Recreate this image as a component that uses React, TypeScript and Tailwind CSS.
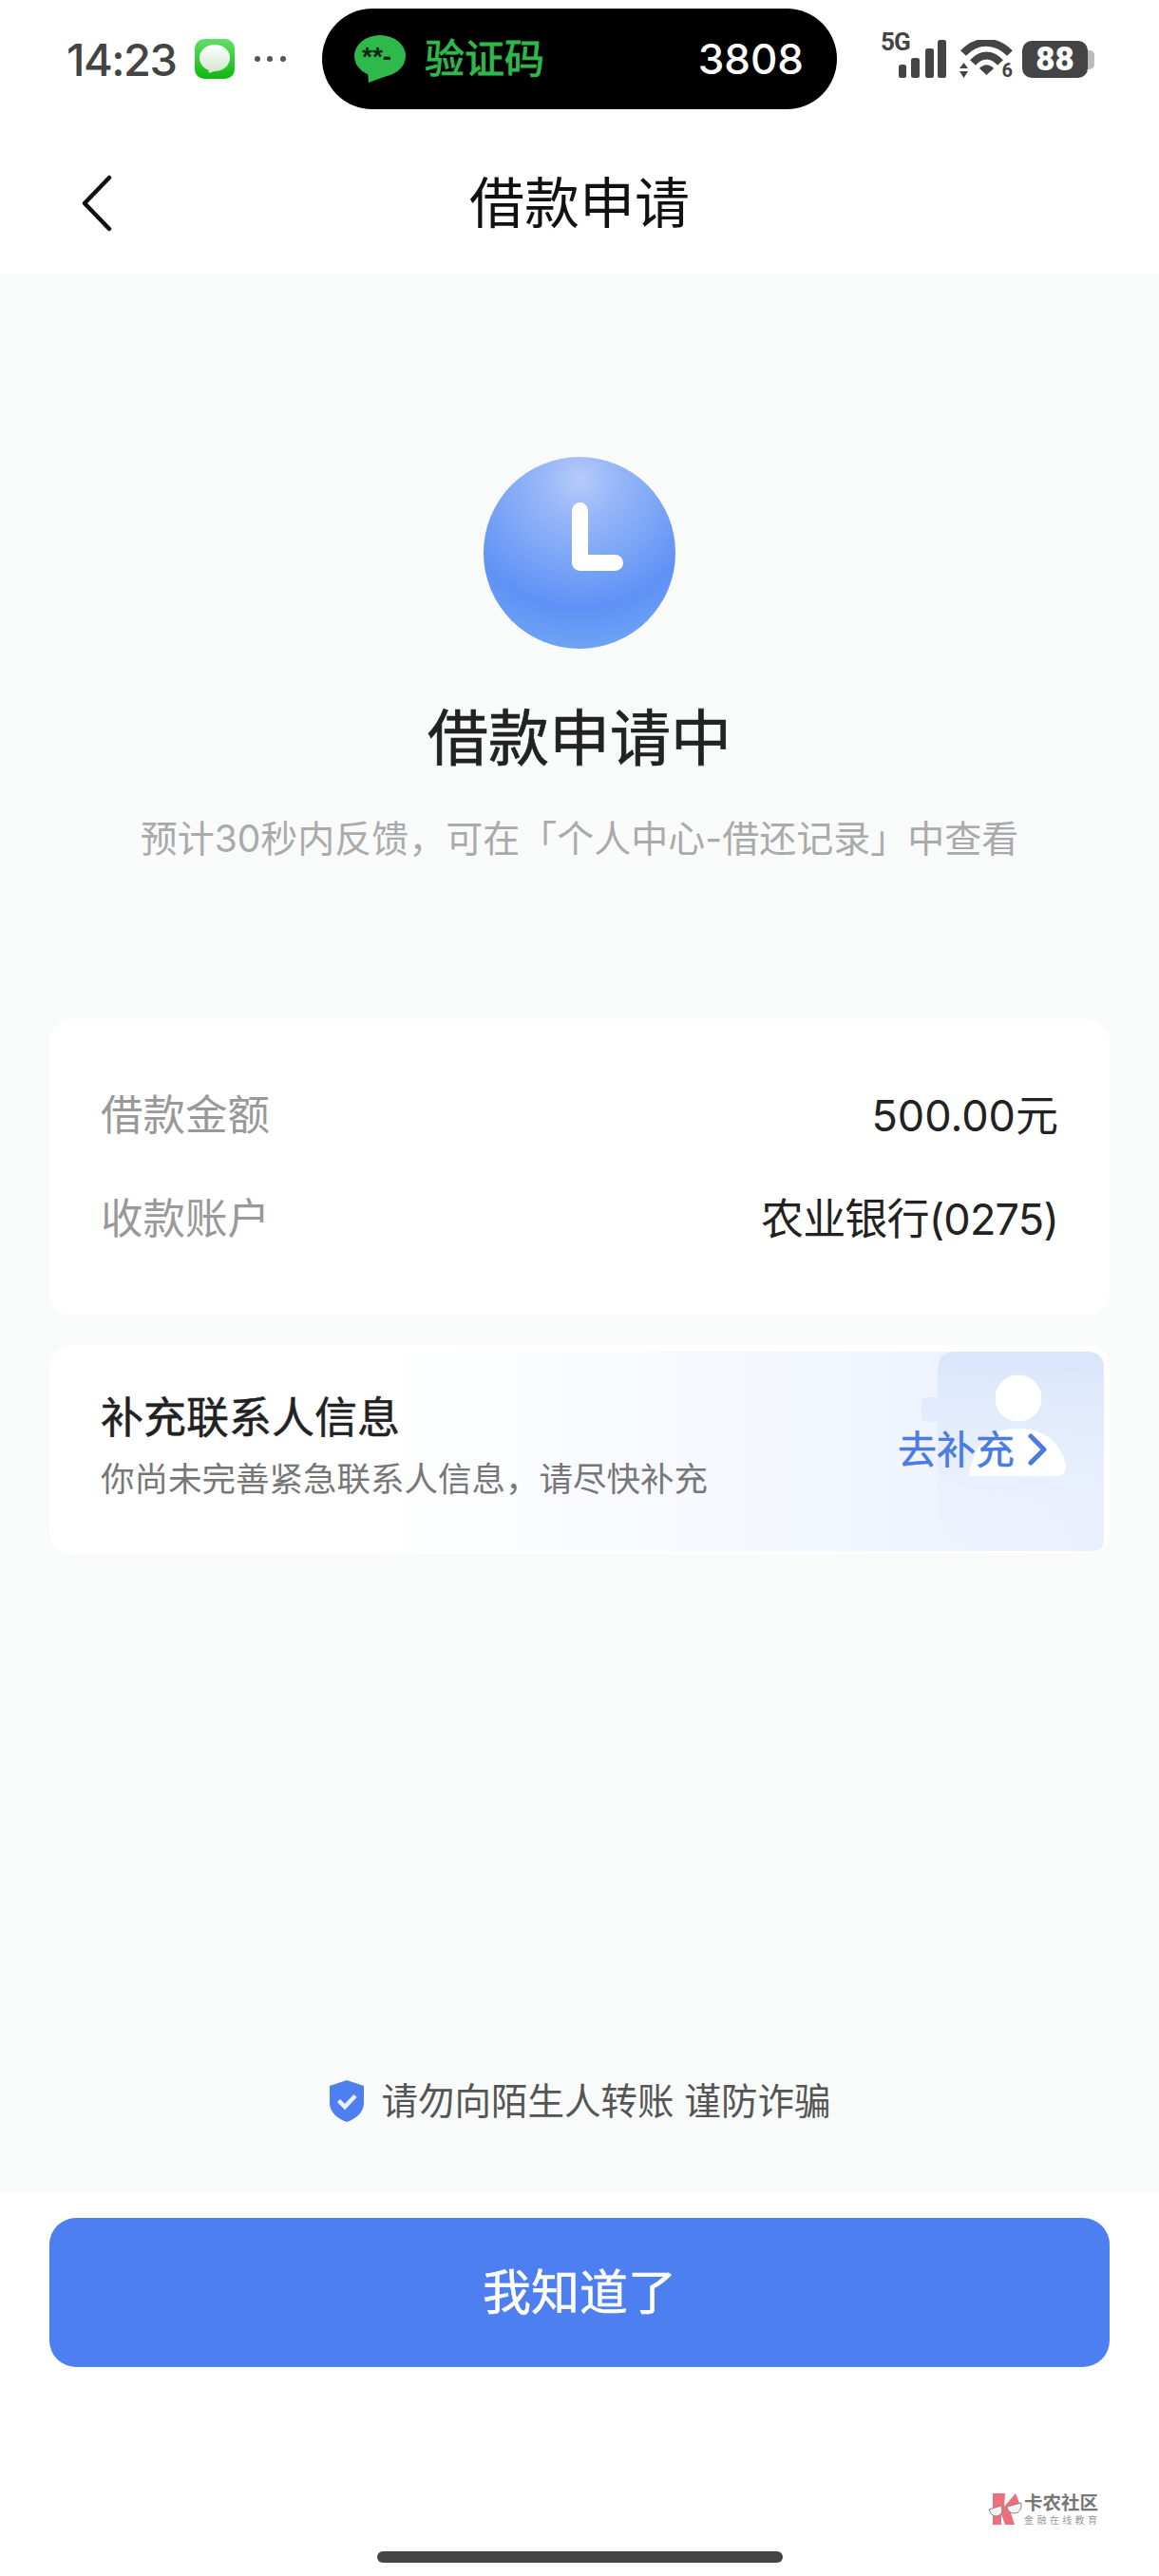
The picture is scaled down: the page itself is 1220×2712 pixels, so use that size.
const font = "font-['Inter','Noto_Sans_CJK_SC',sans-serif]";

function MessageBadge() {
  return (
    <svg width="42" height="42" viewBox="0 0 42 42">
      <defs>
        <linearGradient id="msgBg" x1="0" y1="0" x2="0" y2="1">
          <stop offset="0" stopColor="#5fe06a" />
          <stop offset="1" stopColor="#0fb80f" />
        </linearGradient>
        <linearGradient id="msgBubble" x1="0" y1="0" x2="0" y2="1">
          <stop offset="0" stopColor="#ffffff" />
          <stop offset="1" stopColor="#d4e8d0" />
        </linearGradient>
      </defs>
      <rect width="42" height="42" rx="10" fill="url(#msgBg)" />
      <ellipse cx="21" cy="20" rx="16" ry="14" fill="url(#msgBubble)" />
      <path d="M14 31 L15 36 L24 33 Z" fill="#d4e8d0" />
    </svg>
  );
}

function CodeBubble() {
  return (
    <div className="relative w-[54px] h-[50px] shrink-0">
      <svg width="54" height="50" viewBox="0 0 54 50" className="block">
        <ellipse cx="27" cy="22" rx="27" ry="22" fill="#2fb84c" />
        <path d="M14 38 L15 50 L34 43 Z" fill="#2fb84c" />
      </svg>
      <span className="absolute left-[8px] top-[8px] text-[28px] leading-[30px] font-bold text-[#0c2a12] font-['Liberation_Sans',sans-serif]">**-</span>
    </div>
  );
}

function StatusIcons() {
  return (
    <div className="flex items-end h-[44px] text-[#444]">
      <div className="relative w-[68px] h-[44px]">
        <span className="absolute left-[-2px] top-[-9px] text-[26px] leading-[28px] font-bold tracking-[-1px] font-['Roboto',sans-serif]">5G</span>
        <svg width="52" height="40" viewBox="0 0 52 40" className="absolute right-0 bottom-[1px]">
          <rect x="1" y="26" width="8" height="14" rx="2.5" fill="#444" />
          <rect x="14" y="19" width="9" height="21" rx="2.5" fill="#444" />
          <rect x="29" y="9" width="9" height="31" rx="2.5" fill="#444" />
          <rect x="42" y="0" width="9" height="40" rx="2.5" fill="#444" />
        </svg>
      </div>
      <div className="relative w-[56px] h-[40px] ml-[13px] mb-[1px]">
        <svg width="56" height="40" viewBox="0 0 56 40" className="block">
          <path d="M4 14 C18 -1 38 -1 53 14" fill="none" stroke="#444" strokeWidth="8" />
          <path d="M14 24 C23 14 34 14 43 24" fill="none" stroke="#444" strokeWidth="8" />
          <path d="M21 30 C26 25 31 25 36 30 L28.5 37 Z" fill="#444" />
          <path d="M4.5 24 L9 30 H0 Z M4.5 40 L0 33 H9 Z" fill="#444" />
        </svg>
        <span className="absolute right-[0px] bottom-[-3px] text-[20px] leading-[22px] font-bold font-['Roboto',sans-serif]">6</span>
      </div>
      <div className="flex items-center ml-[10px] mb-[1px]">
        <div className="w-[69px] h-[39px] rounded-[10px] bg-[#444] flex items-center justify-center text-[#fff] text-[35px] leading-none font-black font-['Roboto',sans-serif]">88</div>
        <div className="w-[7px] h-[20px] rounded-r-[5px] bg-[#bbb]" />
      </div>
    </div>
  );
}

function ClockFace() {
  return (
    <div className="w-[202px] h-[202px] rounded-full flex items-center justify-center bg-[radial-gradient(circle_at_50%_12%,#b5cbfa_0%,#97b6f9_20%,#7ea8f7_40%,#5f91f6_66%,#6ea3f5_87%)]">
      <svg width="202" height="202" viewBox="0 0 202 202" className="block">
        <path d="M101.5 56.5 V111.5 H138.5" fill="none" stroke="#fff" strokeWidth="17" strokeLinecap="round" strokeLinejoin="round" />
      </svg>
    </div>
  );
}

function ContactArt() {
  return (
    <svg width="1116" height="220" viewBox="0 0 1116 220" className="absolute inset-0 rounded-[24px]">
      <defs>
        <linearGradient id="bannerBg" x1="0" y1="0" x2="1" y2="0">
          <stop offset="0.3" stopColor="#ffffff" />
          <stop offset="0.65" stopColor="#f5f8fe" />
          <stop offset="1" stopColor="#e9f0fd" />
        </linearGradient>
        <linearGradient id="cardFade" x1="0" y1="0" x2="0" y2="1">
          <stop offset="0" stopColor="#d8e5fb" />
          <stop offset="0.75" stopColor="#e9f0fd" stopOpacity="0.5" />
          <stop offset="1" stopColor="#e9f0fd" stopOpacity="0" />
        </linearGradient>
      </defs>
      <path d="M0 7 H1092 Q1110 7 1110 25 V205 Q1110 217 1098 217 H0 Z" fill="url(#bannerBg)" />
      <path d="M935 217 V81 H924 Q918 81 918 75 V61 Q918 55 924 55 H935 V27 Q935 7 955 7 H1092 Q1110 7 1110 25 V205 Q1110 217 1098 217 Z" fill="url(#cardFade)" />
      <circle cx="1020" cy="56" r="24.5" fill="#fff" />
      <path d="M968 138 C973 104 990 88 1020 88 C1050 88 1064 104 1070 126 V128 Q1070 138 1060 138 Z" fill="#fff" />
    </svg>
  );
}

function Watermark() {
  return (
    <div className="absolute left-[1040px] top-[2625px] flex items-center">
      <svg width="36" height="34" viewBox="0 0 36 34" className="shrink-0">
        <path d="M5 0 H18 L17 14 L29 0 L33 10 L23 17 L28 33 H18 L14 22 V33 H5 Z" fill="#ec6f7c" />
        <path d="M1 17 L14 13 Q17 23 9 24 Q3 24 1 17 Z M20 14 L35 10 Q36 20 28 21 Q21 21 20 14 Z" fill="#f4f4f4" stroke="#888" strokeWidth="1" />
      </svg>
      <div className="ml-[2px] flex flex-col w-[80px]">
        <span className="text-[19.5px] leading-[20px] font-bold text-[#777] whitespace-nowrap">卡农社区</span>
        <span className="mt-[3px] text-[10px] leading-[11px] tracking-[3.4px] text-[#999] whitespace-nowrap">金融在线教育</span>
      </div>
    </div>
  );
}

export default function App() {
  return (
    <div className={`relative w-[1220px] h-[2712px] bg-white overflow-hidden flex flex-col ${font}`}>
      {/* status bar */}
      <div className="h-[124px] shrink-0 pt-[9px] flex items-start">
        <div className="w-[339px] h-[106px] flex items-center pl-[70px] shrink-0">
          <span className="text-[47px] leading-none font-medium text-[#444] tracking-[-1.5px]">14:23</span>
          <span className="ml-[19px] flex"><MessageBadge /></span>
          <span className="ml-[21px] flex gap-[7.5px]">
            <i className="w-[6px] h-[6px] rounded-full bg-[#555]" />
            <i className="w-[6px] h-[6px] rounded-full bg-[#555]" />
            <i className="w-[6px] h-[6px] rounded-full bg-[#555]" />
          </span>
        </div>
        <div className="w-[542px] h-[106px] rounded-full bg-black flex items-center pl-[34px] pr-[35px] shrink-0">
          <CodeBubble />
          <span className="ml-[20px] text-[42px] leading-none text-[#2fb84c] font-normal [-webkit-text-stroke:1px_#2fb84c]">验证码</span>
          <span className="ml-auto text-[44px] leading-none text-white font-medium">3808</span>
        </div>
        <div className="ml-[48px] mt-[30px]">
          <StatusIcons />
        </div>
      </div>

      {/* nav */}
      <div className="relative h-[164px] shrink-0 flex items-center justify-center pt-[16px]">
        <svg width="34" height="60" viewBox="0 0 34 60" className="absolute left-[85px] top-[60px]">
          <path d="M30 3 L4 30 L30 57" fill="none" stroke="#111" strokeWidth="4.5" strokeLinecap="round" strokeLinejoin="round" />
        </svg>
        <span className="text-[58px] leading-none text-[#111]">借款申请</span>
      </div>

      {/* content */}
      <div className="h-[2020px] shrink-0 bg-[#f9fbfb] flex flex-col">
        <div className="pt-[193px] flex flex-col items-center">
          <ClockFace />
          <h1 className="mt-[49px] text-[64px] leading-[90px] font-normal text-[#222] [-webkit-text-stroke:0.7px_#222]">借款申请中</h1>
          <p className="mt-[35px] text-[39px] leading-[52px] text-[#aaa]">{"预计30秒内反馈\uFF0C可在「个人中心-借还记录」中查看"}</p>
        </div>

        <div className="mt-[164px] mx-[52px] h-[312px] bg-white rounded-[24px] px-[54px] pt-[78px] flex flex-col gap-[63px]">
          <div className="flex justify-between items-center h-[46px]">
            <span className="text-[44.5px] leading-none text-[#999]">借款金额</span>
            <span className="text-[45px] leading-none text-[#222]">500.00元</span>
          </div>
          <div className="flex justify-between items-center h-[46px]">
            <span className="text-[44.5px] leading-none text-[#999]">收款账户</span>
            <span className="text-[45px] leading-none text-[#222] tracking-[-0.8px]">农业银行(0275)</span>
          </div>
        </div>

        <div className="relative mt-[31px] mx-[52px] h-[220px] bg-white rounded-[24px] overflow-hidden flex items-center pl-[54px] pr-[65px]">
          <ContactArt />
          <div className="relative flex flex-col pb-[5px]">
            <span className="text-[45px] leading-[54px] font-normal text-[#222] [-webkit-text-stroke:0.5px_#222]">补充联系人信息</span>
            <span className="mt-[15px] text-[35.5px] leading-[46px] text-[#777]">{"你尚未完善紧急联系人信息\uFF0C请尽快补充"}</span>
          </div>
          <div className="relative ml-auto flex items-center">
            <span className="text-[41px] leading-none text-[#4a7be0] [-webkit-text-stroke:0.5px_#4a7be0]">去补充</span>
            <svg width="22" height="34" viewBox="0 0 22 34" className="ml-[13px]">
              <path d="M4 3 L18 17 L4 31" fill="none" stroke="#4a7be0" strokeWidth="5" strokeLinecap="round" strokeLinejoin="round" />
            </svg>
          </div>
        </div>

        <div className="mt-auto pb-[72px] flex items-center justify-center">
          <svg width="38" height="44" viewBox="0 0 38 44">
            <path d="M19 0 L37 6 V24 C37 34 28 41 19 44 C10 41 1 34 1 24 V6 Z" fill="#4d7ff0" />
            <path d="M10.5 21.5 L17 28 L28 16.5" fill="none" stroke="#e8f0ff" strokeWidth="4.5" />
          </svg>
          <span className="ml-[18px] text-[38.5px] leading-[48px] text-[#555] whitespace-pre">请勿向陌生人转账 谨防诈骗</span>
        </div>
      </div>

      {/* footer */}
      <div className="flex-1 px-[52px] pt-[27px] flex flex-col">
        <button className="w-full h-[157px] rounded-[28px] bg-[#4d7ff0] text-white text-[51px] font-normal [-webkit-text-stroke:0.5px_#fff] leading-none">我知道了</button>
        <div className="mt-auto mb-[14px] self-center w-[427px] h-[12px] rounded-full bg-[#444]" />
      </div>

      <Watermark />
    </div>
  );
}
